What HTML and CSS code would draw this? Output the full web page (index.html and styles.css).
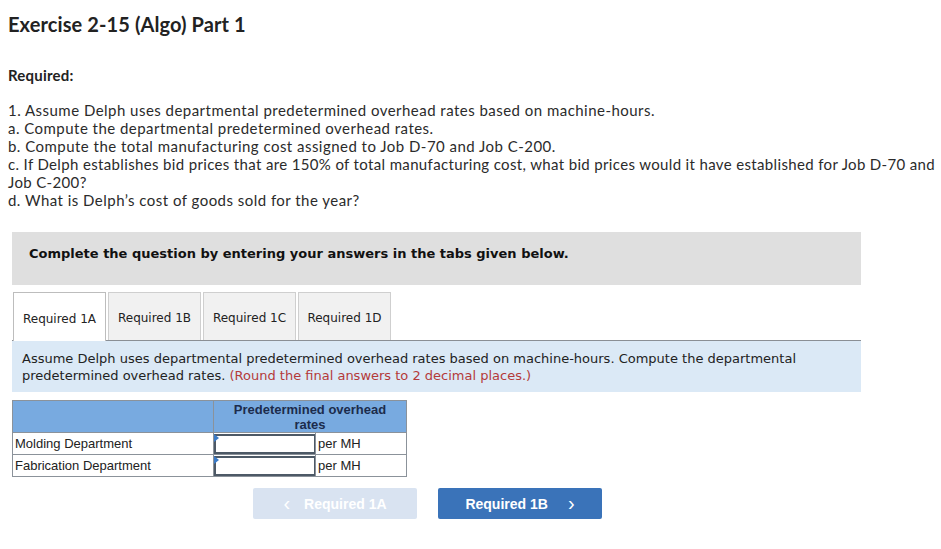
FILE: index.html
```
<!DOCTYPE html>
<html>
<head>
<meta charset="utf-8">
<link rel="stylesheet" href="styles.css">
</head>
<body>
<h1 class="title">Exercise 2-15 (Algo) Part 1</h1>
<h2 class="req">Required:</h2>
<div class="list">
<p>1. Assume Delph uses departmental predetermined overhead rates based on machine-hours.</p>
<p>a. Compute the departmental predetermined overhead rates.</p>
<p>b. Compute the total manufacturing cost assigned to Job D-70 and Job C-200.</p>
<p class="lc">c. If Delph establishes bid prices that are 150% of total manufacturing cost, what bid prices would it have established for Job D-70 and <span class="nw">Job C-200?</span></p>
<p>d. What is Delph’s cost of goods sold for the year?</p>
</div>
<div class="panel">
  <div class="complete">Complete the question by entering your answers in the tabs given below.</div>
  <div class="tabs">
    <div class="tab active">Required 1A</div>
    <div class="tab">Required 1B</div>
    <div class="tab">Required 1C</div>
    <div class="tab">Required 1D</div>
  </div>
  <div class="info">Assume Delph uses departmental predetermined overhead rates based on machine-hours. Compute the departmental predetermined overhead rates. <span class="red">(Round the final answers to 2 decimal places.)</span></div>
  <table class="grid">
    <tr class="head"><th class="c1"></th><th colspan="2">Predetermined overhead<br>rates</th></tr>
    <tr><td class="c1">Molding Department</td><td class="c2"><div class="inp"><span class="tri"></span></div></td><td class="c3">per MH</td></tr>
    <tr><td class="c1">Fabrication Department</td><td class="c2"><div class="inp"><span class="tri"></span></div></td><td class="c3">per MH</td></tr>
  </table>
  <div class="nav">
    <div class="btn disabled"><span class="chev">&lsaquo;</span>Required 1A</div>
    <div class="btn primary">Required 1B<span class="chev right">&rsaquo;</span></div>
  </div>
</div>
</body>
</html>
```
FILE: styles.css
```
html, body { margin: 0; padding: 0; background: #fff; }
body { padding: 0 0 0 8px; font-family: Lato, "Open Sans", sans-serif; color: #2b2b2b; overflow-x: hidden; }
.title { margin: 0; padding-top: 12px; font-size: 20px; font-weight: 700; line-height: 24px; color: #222; letter-spacing: 0.1px; }
.req { margin: 0; padding-top: 29px; font-size: 15px; font-weight: 700; line-height: 20px; color: #222; letter-spacing: 0.2px; }
.list { padding-top: 16px; font-size: 15px; line-height: 18px; letter-spacing: 0.47px; width: 936px; }
.list p { margin: 0; }
.list .lc { letter-spacing: 0.35px; }
.nw { white-space: nowrap; }
.panel { width: 849px; margin-left: 4px; margin-top: 23px; font-family: "DejaVu Sans", Verdana, sans-serif; }
.complete { background: #dfdfdf; height: 53px; box-sizing: border-box; padding: 13px 0 0 17px; font-size: 13px; font-weight: 700; color: #111; line-height: 18px; }
.tabs { display: flex; gap: 2px; margin-top: 7px; padding-left: 1px; border-bottom: 1px solid #8a8f95; height: 48px; }
.tab { width: 93px; box-sizing: border-box; height: 48px; border: 1px solid #cfcfcf; border-bottom: none; background: #f1f1f1; font-size: 12px; color: #222; display: flex; align-items: center; justify-content: center; padding-top: 3px; }
.tab.active { background: #fff; border-color: #bdbdbd; height: 49px; margin-bottom: -1px; }
.info { background: #dbe9f6; padding: 9px 10px 8px 10px; font-size: 13px; line-height: 17px; color: #222; }
.red { color: #b43a3a; }
.grid { border-collapse: collapse; margin-top: 8px; font-family: "Liberation Sans", Arial, sans-serif; font-size: 13px; color: #222; }
.grid th, .grid td { border: 1px solid #8b929a; padding: 0; }
.grid .head th { background: #78aae0; height: 31px; font-weight: 700; color: #1c2c4c; line-height: 15px; vertical-align: middle; }
.grid td { height: 21px; }
.c1 { width: 198px; padding-left: 2px !important; text-align: left; }
.c2 { width: 101px; }
.c3 { width: 88px; padding-left: 2px !important; }
.inp { position: relative; height: 20px; border: 1px solid #4d5966; border-width: 2px 1px 2px 2px; box-sizing: border-box; width: 101px; background: #fff; }
.tri { position: absolute; left: -2px; top: -2px; width: 0; height: 0; border-top: 4px solid transparent; border-bottom: 4px solid transparent; border-left: 5px solid #3a7bc8; }
.nav { display: flex; gap: 21px; margin-top: 11px; padding-left: 241px; }
.btn { width: 164px; height: 31px; border-radius: 2px; display: flex; align-items: center; justify-content: center; font-family: "Liberation Sans", Arial, sans-serif; font-size: 14px; font-weight: 700; color: #fff; }
.btn.disabled { background: #d9e3f1; }
.btn.primary { background: #3a73b9; }
.chev { font-size: 20px; font-weight: 400; line-height: 1; margin-right: 14px; position: relative; top: -1px; }
.chev.right { margin-right: 0; margin-left: 20px; }
```
